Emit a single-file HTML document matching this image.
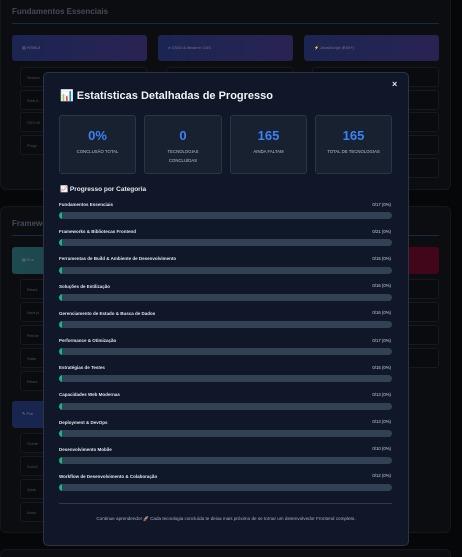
<!DOCTYPE html>
<html><head><meta charset="utf-8"><style>
*{margin:0;padding:0;box-sizing:border-box}
html,body{width:462px;height:557px;overflow:hidden}
body{background:#060709;font-family:"Liberation Sans",sans-serif;position:relative}
.a{position:absolute}
.sec{background:#0b0d11;border:1px solid #14171c;border-radius:6px}
.h{color:#444b57;font-size:8px;font-weight:bold}
.line{height:1px;background:#152a45}
.card{border-radius:3px;font-size:4px;color:#5b6270;font-weight:bold;padding:10px 0 0 10px}
.it{border:1px solid #151920;border-radius:3px;background:#090b0e;font-size:4px;color:#4a4f58;padding:7px 0 0 6px}
.modal{left:43px;top:72px;width:366px;height:474px;background:#0f1729;border:1px solid #2a3445;border-radius:5px}
.sb{top:115px;height:59px;background:#18212f;border:1px solid #2b3546;border-radius:3px;text-align:center}
.sb b{display:block;color:#3b82f6;font-size:13px;margin-top:12px}
.sb span{display:block;color:#b9c2cf;font-size:4.3px;line-height:9px;margin-top:4px}
.lb{left:59px;color:#e2e8f0;font-size:4.5px;font-weight:bold}
.pc{left:360px;width:31px;text-align:right;color:#cbd5e1;font-size:4.3px}
.bar{left:59px;width:333px;height:7px;background:#334155;border-radius:4px;overflow:hidden}
.bar i{display:block;width:3px;height:7px;background:#10b981;border-radius:4px 0 0 4px}
</style></head><body>
<div class="a sec" style="left:0;top:-10px;width:451px;height:200px"></div>
<div class="a h" style="left:12px;top:7px">Fundamentos Essenciais</div>
<div class="a line" style="left:12px;top:23px;width:427px"></div>
<div class="a card" style="left:12px;top:35px;width:135px;height:26px;background:linear-gradient(90deg,#1b2552,#2a2352)">▤ HTML5</div>
<div class="a card" style="left:158px;top:35px;width:135px;height:26px;background:linear-gradient(90deg,#1b2552,#2a2352)">● CSS3 &amp; Modern CSS</div>
<div class="a card" style="left:304px;top:35px;width:135px;height:26px;background:linear-gradient(90deg,#1b2552,#2a2352)">⚡ JavaScript (ES6+)</div>
<div class="a it" style="left:20px;top:67px;width:127px;height:20px">Seman</div>
<div class="a it" style="left:20px;top:90px;width:127px;height:20px">Web A</div>
<div class="a it" style="left:20px;top:112px;width:127px;height:20px">SEO M</div>
<div class="a it" style="left:20px;top:135px;width:127px;height:20px">Progr</div>
<div class="a it" style="left:166px;top:67px;width:127px;height:20px"></div>
<div class="a it" style="left:312px;top:67px;width:127px;height:20px"></div>
<div class="a it" style="left:312px;top:90px;width:127px;height:20px"></div>
<div class="a it" style="left:312px;top:112px;width:127px;height:20px"></div>
<div class="a it" style="left:312px;top:135px;width:127px;height:20px"></div>
<div class="a it" style="left:312px;top:158px;width:127px;height:20px"></div>

<div class="a sec" style="left:0;top:206px;width:451px;height:327px"></div>
<div class="a h" style="left:12px;top:219px">Frameworks</div>
<div class="a line" style="left:12px;top:235px;width:427px"></div>
<div class="a card" style="left:12px;top:247px;width:135px;height:27px;background:linear-gradient(90deg,#1c4b50,#1b3a45)">▣ Eco</div>
<div class="a card" style="left:304px;top:247px;width:135px;height:27px;background:#42061a"></div>
<div class="a it" style="left:20px;top:279px;width:127px;height:20px">React</div>
<div class="a it" style="left:20px;top:302px;width:127px;height:20px">Next.js</div>
<div class="a it" style="left:20px;top:325px;width:127px;height:20px">Rende</div>
<div class="a it" style="left:20px;top:348px;width:127px;height:20px">State</div>
<div class="a it" style="left:20px;top:371px;width:127px;height:20px">React</div>
<div class="a it" style="left:312px;top:279px;width:127px;height:20px"></div>
<div class="a it" style="left:312px;top:302px;width:127px;height:20px"></div>
<div class="a it" style="left:312px;top:325px;width:127px;height:20px"></div>
<div class="a it" style="left:312px;top:348px;width:127px;height:20px"></div>
<div class="a card" style="left:12px;top:401px;width:135px;height:27px;background:#18264f">✎ Fra</div>
<div class="a it" style="left:20px;top:433px;width:127px;height:20px">Svelte</div>
<div class="a it" style="left:20px;top:456px;width:127px;height:20px">SolidJ</div>
<div class="a it" style="left:20px;top:479px;width:127px;height:20px">Qwik</div>
<div class="a it" style="left:20px;top:502px;width:127px;height:20px">Astro</div>
<div class="a sec" style="left:0;top:549px;width:451px;height:20px"></div>

<div class="a modal"></div>
<div class="a" style="left:392px;top:79px;color:#e5e7eb;font-size:9px;font-weight:bold">×</div>
<div class="a" style="left:60px;top:89px;color:#f1f5f9;font-size:11px;font-weight:bold">📊 Estatísticas Detalhadas de Progresso</div>
<div class="a sb" style="left:59px;width:77px"><b>0%</b><span>CONCLUSÃO TOTAL</span></div>
<div class="a sb" style="left:144px;width:78px"><b>0</b><span>TECNOLOGIAS<br>CONCLUÍDAS</span></div>
<div class="a sb" style="left:230px;width:77px"><b>165</b><span>AINDA FALTAM</span></div>
<div class="a sb" style="left:315px;width:77px"><b>165</b><span>TOTAL DE TECNOLOGIAS</span></div>
<div class="a" style="left:60px;top:185px;color:#e2e8f0;font-size:6.5px;font-weight:bold">📈 Progresso por Categoria</div>

<div class="a lb" style="top:202px">Fundamentos Essenciais</div><div class="a pc" style="top:202px">0/17 (0%)</div><div class="a bar" style="top:212px"><i></i></div>
<div class="a lb" style="top:229px">Frameworks &amp; Bibliotecas Frontend</div><div class="a pc" style="top:229px">0/21 (0%)</div><div class="a bar" style="top:239px"><i></i></div>
<div class="a lb" style="top:256px">Ferramentas de Build &amp; Ambiente de Desenvolvimento</div><div class="a pc" style="top:256px">0/15 (0%)</div><div class="a bar" style="top:267px"><i></i></div>
<div class="a lb" style="top:284px">Soluções de Estilização</div><div class="a pc" style="top:283px">0/16 (0%)</div><div class="a bar" style="top:294px"><i></i></div>
<div class="a lb" style="top:311px">Gerenciamento de Estado &amp; Busca de Dados</div><div class="a pc" style="top:310px">0/16 (0%)</div><div class="a bar" style="top:321px"><i></i></div>
<div class="a lb" style="top:338px">Performance &amp; Otimização</div><div class="a pc" style="top:338px">0/17 (0%)</div><div class="a bar" style="top:348px"><i></i></div>
<div class="a lb" style="top:365px">Estratégias de Testes</div><div class="a pc" style="top:365px">0/15 (0%)</div><div class="a bar" style="top:375px"><i></i></div>
<div class="a lb" style="top:392px">Capacidades Web Modernas</div><div class="a pc" style="top:392px">0/13 (0%)</div><div class="a bar" style="top:403px"><i></i></div>
<div class="a lb" style="top:420px">Deployment &amp; DevOps</div><div class="a pc" style="top:419px">0/13 (0%)</div><div class="a bar" style="top:430px"><i></i></div>
<div class="a lb" style="top:447px">Desenvolvimento Mobile</div><div class="a pc" style="top:446px">0/10 (0%)</div><div class="a bar" style="top:457px"><i></i></div>
<div class="a lb" style="top:474px">Workflow de Desenvolvimento &amp; Colaboração</div><div class="a pc" style="top:473px">0/12 (0%)</div><div class="a bar" style="top:484px"><i></i></div>

<div class="a" style="left:59px;top:503px;width:333px;height:1px;background:#2e3a4c"></div>
<div class="a" style="left:43px;top:516px;width:366px;text-align:center;color:#a8b2c0;font-size:4.6px">Continue aprendendo! 🚀 Cada tecnologia concluída te deixa mais próximo de se tornar um desenvolvedor Frontend completo.</div>
</body></html>
